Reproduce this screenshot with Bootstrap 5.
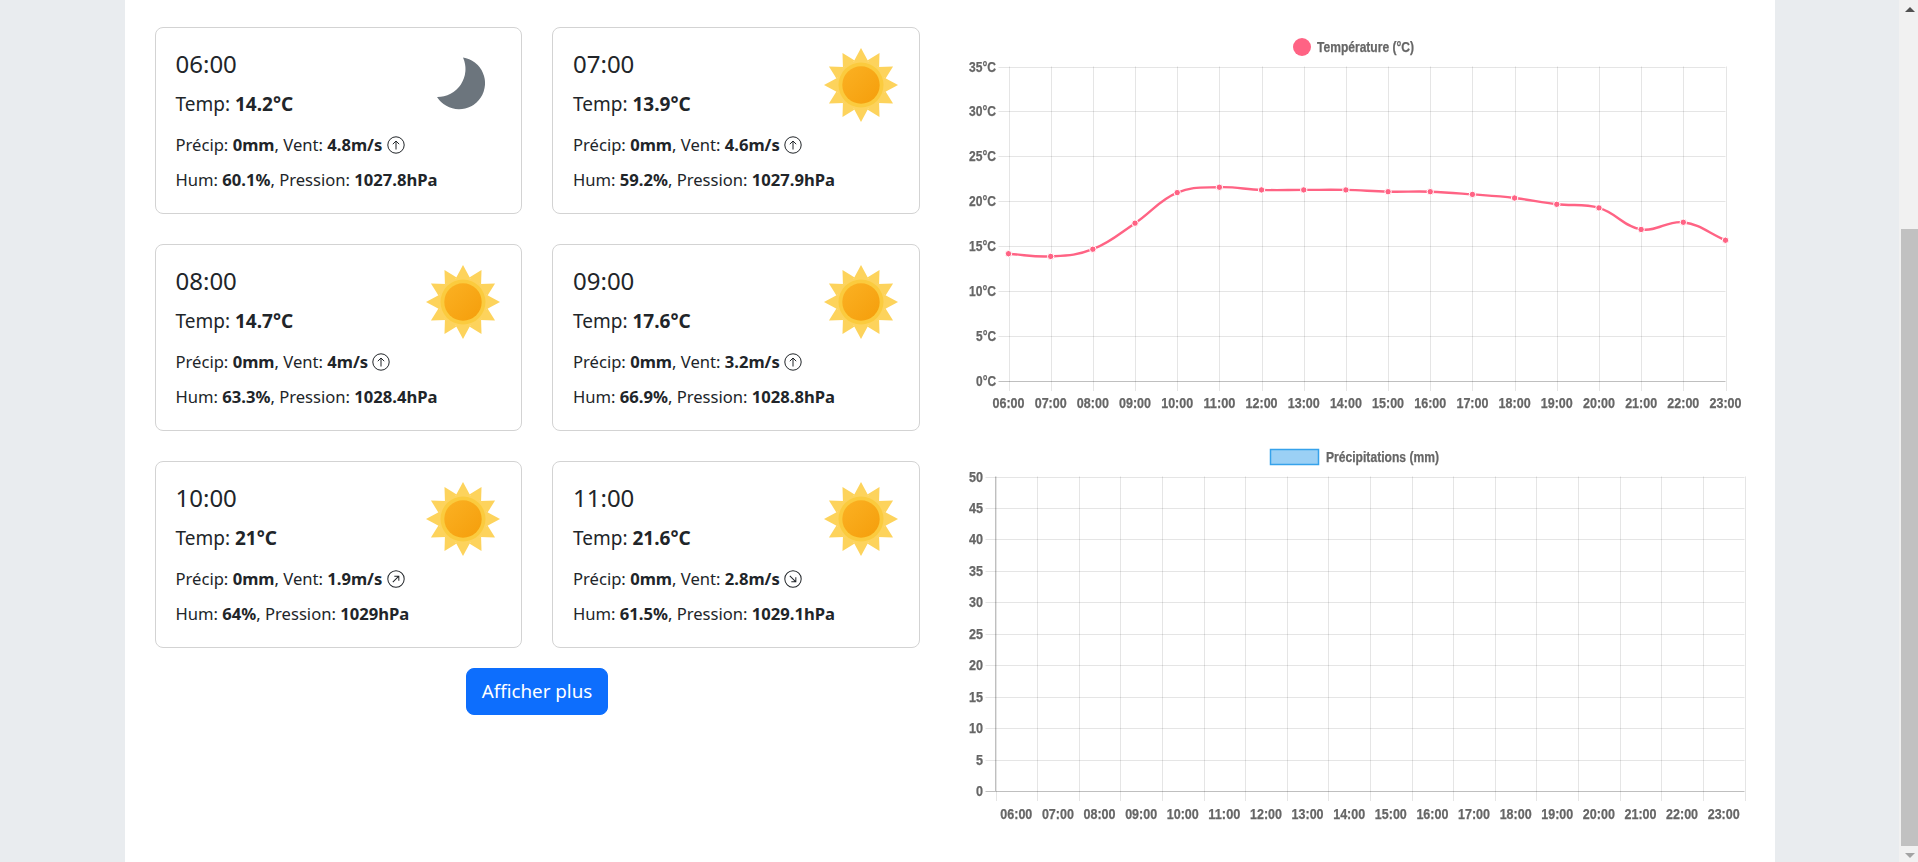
<!DOCTYPE html>
<html lang="fr">
<head>
<meta charset="utf-8">
<title>Météo</title>
<link href="https://cdn.jsdelivr.net/npm/bootstrap@5.3.0/dist/css/bootstrap.min.css" rel="stylesheet">
<style>
html,body{height:100%;overflow:hidden}
body{background:#e9ecef;font-family:"Noto Sans",sans-serif;color:#212529}
.wx-page{width:1650px;background:#fff;height:862px;padding-top:27px}
.wx-col{padding:0 15px}
.wx-slot{padding:0 15px 30px}
.wx-card{border:1px solid #d3d3d3;border-radius:8px;height:187px}
.wx-body{padding:21px 20px 0;display:flex;justify-content:space-between}
.wx-text{flex:1 1 0;min-width:0}
.wx-time{font-size:24px;line-height:30px;margin-bottom:10px}
.wx-temp{font-size:19px;line-height:30px;margin-bottom:11px}
.wx-line{font-size:16.6px;line-height:30px;margin-bottom:5px;white-space:nowrap}
.wx-line b,.wx-temp b{font-weight:700}
.wx-dir{width:18px;height:18px;vertical-align:-3px}
.wx-icon{width:80px;height:80px;margin:-4px -2px 0 0;flex:none}
.wx-more{font-size:18.8px;width:142px;height:47px;padding:0;margin-top:-10px;border-radius:8px}
.wx-chart{display:block;width:825px;filter:blur(.4px)}
.wx-chart text{font-family:"Liberation Sans",sans-serif;font-weight:700;font-size:14px;fill:#666;stroke:#666;stroke-width:.25px}
.wx-bar{width:19px;height:862px;background:#f1f1f1;flex:none}
.wx-bar-up,.wx-bar-down{width:0;height:0;border-left:5px solid transparent;border-right:5px solid transparent;margin-left:6px}
.wx-bar-up{border-bottom:5px solid #505050;margin-top:7px}
.wx-bar-thumb{width:17px;height:617px;background:#c1c1c1;margin:217px 0 0 2px}
.wx-bar-down{border-top:5px solid #a3a3a3;margin-top:7px}
.wx-defs{position:absolute;width:0;height:0}
</style>
</head>
<body class="d-flex">
<svg class="wx-defs">
  <defs>
    <linearGradient id="sunCore" x1="0" y1="0" x2="1" y2="1">
      <stop offset="0" stop-color="#fbb123"/><stop offset="1" stop-color="#f59e0b"/>
    </linearGradient>
    <symbol id="sun" viewBox="-40 -40 80 80">
      <g fill="#fdd35c">
        <polygon id="spk" points="-7,-24 0,-37 7,-24"/>
        <use href="#spk" transform="rotate(30)"/><use href="#spk" transform="rotate(60)"/>
        <use href="#spk" transform="rotate(90)"/><use href="#spk" transform="rotate(120)"/>
        <use href="#spk" transform="rotate(150)"/><use href="#spk" transform="rotate(180)"/>
        <use href="#spk" transform="rotate(210)"/><use href="#spk" transform="rotate(240)"/>
        <use href="#spk" transform="rotate(270)"/><use href="#spk" transform="rotate(300)"/>
        <use href="#spk" transform="rotate(330)"/>
        <circle r="25"/>
      </g>
      <circle r="22.5" fill="#fbcb3e"/>
      <circle r="18.7" fill="url(#sunCore)"/>
    </symbol>
    <symbol id="moon" viewBox="0 0 80 80">
      <path fill="#6c757d" d="M40 12.500A26 26 0 1 1 14 52A28 28 0 0 0 40 12.500Z"/>
    </symbol>
    <symbol id="dir" viewBox="0 0 18 18">
      <circle cx="9" cy="9" r="8.2" fill="none" stroke="#212529" stroke-width="1"/>
      <path d="M9 13.500V5M5.800 8.200 9 5l3.200 3.200" fill="none" stroke="#212529" stroke-width="1"/>
    </symbol>
  </defs>
</svg>
<main class="flex-fill d-flex justify-content-center">
  <div class="wx-page">
    <div class="row g-0">
      <div class="col-6 wx-col">
        <div class="row g-0">
          <div class="col-6 wx-slot"><div class="card wx-card"><div class="wx-body">
            <div class="wx-text"><div class="wx-time">06:00</div><div class="wx-temp">Temp: <b>14.2°C</b></div>
            <div class="wx-line">Précip: <b>0mm</b>, Vent: <b>4.8m/s</b> <svg class="wx-dir"><use href="#dir"/></svg></div>
            <div class="wx-line">Hum: <b>60.1%</b>, Pression: <b>1027.8hPa</b></div></div>
            <svg class="wx-icon"><use href="#moon"/></svg>
          </div></div></div>
          <div class="col-6 wx-slot"><div class="card wx-card"><div class="wx-body">
            <div class="wx-text"><div class="wx-time">07:00</div><div class="wx-temp">Temp: <b>13.9°C</b></div>
            <div class="wx-line">Précip: <b>0mm</b>, Vent: <b>4.6m/s</b> <svg class="wx-dir"><use href="#dir"/></svg></div>
            <div class="wx-line">Hum: <b>59.2%</b>, Pression: <b>1027.9hPa</b></div></div>
            <svg class="wx-icon"><use href="#sun"/></svg>
          </div></div></div>
          <div class="col-6 wx-slot"><div class="card wx-card"><div class="wx-body">
            <div class="wx-text"><div class="wx-time">08:00</div><div class="wx-temp">Temp: <b>14.7°C</b></div>
            <div class="wx-line">Précip: <b>0mm</b>, Vent: <b>4m/s</b> <svg class="wx-dir"><use href="#dir"/></svg></div>
            <div class="wx-line">Hum: <b>63.3%</b>, Pression: <b>1028.4hPa</b></div></div>
            <svg class="wx-icon"><use href="#sun"/></svg>
          </div></div></div>
          <div class="col-6 wx-slot"><div class="card wx-card"><div class="wx-body">
            <div class="wx-text"><div class="wx-time">09:00</div><div class="wx-temp">Temp: <b>17.6°C</b></div>
            <div class="wx-line">Précip: <b>0mm</b>, Vent: <b>3.2m/s</b> <svg class="wx-dir"><use href="#dir"/></svg></div>
            <div class="wx-line">Hum: <b>66.9%</b>, Pression: <b>1028.8hPa</b></div></div>
            <svg class="wx-icon"><use href="#sun"/></svg>
          </div></div></div>
          <div class="col-6 wx-slot"><div class="card wx-card"><div class="wx-body">
            <div class="wx-text"><div class="wx-time">10:00</div><div class="wx-temp">Temp: <b>21°C</b></div>
            <div class="wx-line">Précip: <b>0mm</b>, Vent: <b>1.9m/s</b> <svg class="wx-dir" viewBox="0 0 18 18"><use href="#dir" width="18" height="18" transform="rotate(45 9 9)"/></svg></div>
            <div class="wx-line">Hum: <b>64%</b>, Pression: <b>1029hPa</b></div></div>
            <svg class="wx-icon"><use href="#sun"/></svg>
          </div></div></div>
          <div class="col-6 wx-slot"><div class="card wx-card"><div class="wx-body">
            <div class="wx-text"><div class="wx-time">11:00</div><div class="wx-temp">Temp: <b>21.6°C</b></div>
            <div class="wx-line">Précip: <b>0mm</b>, Vent: <b>2.8m/s</b> <svg class="wx-dir" viewBox="0 0 18 18"><use href="#dir" width="18" height="18" transform="rotate(135 9 9)"/></svg></div>
            <div class="wx-line">Hum: <b>61.5%</b>, Pression: <b>1029.1hPa</b></div></div>
            <svg class="wx-icon"><use href="#sun"/></svg>
          </div></div></div>
        </div>
        <div class="d-flex justify-content-center">
          <button type="button" class="btn btn-primary wx-more">Afficher plus</button>
        </div>
      </div>
      <div class="col-6">
        <svg id="c1" class="wx-chart" height="408" viewBox="950 27 825 408"></svg>
        <svg id="c2" class="wx-chart" height="405" viewBox="950 435 825 405"></svg>
      </div>
    </div>
  </div>
</main>
<aside class="wx-bar" aria-hidden="true">
  <div class="wx-bar-up"></div>
  <div class="wx-bar-thumb"></div>
  <div class="wx-bar-down"></div>
</aside>
<script src="https://cdn.jsdelivr.net/npm/bootstrap@5.3.0/dist/js/bootstrap.bundle.min.js"></script>
<script>
var hours=['06','07','08','09','10','11','12','13','14','15','16','17','18','19','20','21','22','23'].map(function(h){return h+':00'});
var grid='rgba(0,0,0,.1)',zero='rgba(0,0,0,.25)';
var ylen={1:7,2:14,3:20,4:27};
function line(x1,y1,x2,y2,c){return '<line x1="'+x1+'" y1="'+y1+'" x2="'+x2+'" y2="'+y2+'" stroke="'+c+'" stroke-width="1"/>'}
function text(x,y,s,len,anchor){return '<text x="'+x+'" y="'+y+'" text-anchor="'+anchor+'" dominant-baseline="central" textLength="'+len+'" lengthAdjust="spacingAndGlyphs">'+s+'</text>'}
function axes(o){
  var s='',i,y,x;
  for(i=0;i<=o.ny;i++){
    y=Math.round(o.top+(o.bot-o.top)*i/o.ny)+.5;
    s+=line(o.left-10,y,o.right,y,i==o.ny?zero:grid);
    var lab=o.yl(o.ny-i);
    s+=text(o.ylx,y-.8,lab,ylen[lab.length],'end');
  }
  for(i=0;i<=o.nx;i++){
    x=Math.round(o.left+(o.right-o.left)*i/o.nx)+.5;
    s+=line(x,o.top,x,o.bot+10,grid);
  }
  hours.forEach(function(h,k){
    var px=o.left+(o.right-o.left)*(k+o.off)/o.nx;
    s+=text(px,o.xly,h,32,'middle');
  });
  return s;
}
// temperature chart
var c1={top:66.5,bot:381,left:1008.5,right:1725.5,ny:7,nx:17,off:0,ylx:996,xly:403,yl:function(i){return (i*5)+'°C'}};
var t=[14.2,13.9,14.7,17.6,21,21.6,21.3,21.3,21.3,21.1,21.1,20.8,20.4,19.7,19.3,16.9,17.7,15.7];
var pts=t.map(function(v,i){return [c1.left+(c1.right-c1.left)*i/17,381.300-v*8.985]});
function dist(a,b){return Math.hypot(a[0]-b[0],a[1]-b[1])}
var ctrl=pts.map(function(p,i){
  var a=pts[i-1]||p,b=pts[i+1]||p,d1=dist(a,p),d2=dist(p,b),tn=.4,s=d1+d2||1;
  return {p:[p[0]-tn*d1/s*(b[0]-a[0]),p[1]-tn*d1/s*(b[1]-a[1])],n:[p[0]+tn*d2/s*(b[0]-a[0]),p[1]+tn*d2/s*(b[1]-a[1])]};
});
var d='M'+pts[0].join(' ');
for(var i=1;i<pts.length;i++){d+='C'+ctrl[i-1].n.join(' ')+' '+ctrl[i].p.join(' ')+' '+pts[i].join(' ')}
var html=axes(c1)+'<path d="'+d+'" fill="none" stroke="#ff6384" stroke-width="2.400"/>';
pts.forEach(function(p){html+='<circle cx="'+p[0]+'" cy="'+p[1]+'" r="3.200" fill="#ff6384" stroke="#fff" stroke-width="1"/>'});
html+='<circle cx="1302" cy="47" r="9" fill="#ff6384"/>'+text(1317,47,'Température (°C)',97,'start');
document.getElementById('c1').innerHTML=html;
// precipitation chart
var c2={top:476.5,bot:791,left:995.5,right:1744.5,ny:10,nx:18,off:.5,ylx:983,xly:814,yl:function(i){return String(i*5)}};
html=axes(c2)+line(995.5,476.5,995.5,791,zero);
html+='<rect x="1270.500" y="449.500" width="48" height="15" fill="#9bd0f5" stroke="#36a2eb" stroke-width="1.500"/>'+text(1326,457,'Précipitations (mm)',113,'start');
document.getElementById('c2').innerHTML=html;
</script>
</body>
</html>
